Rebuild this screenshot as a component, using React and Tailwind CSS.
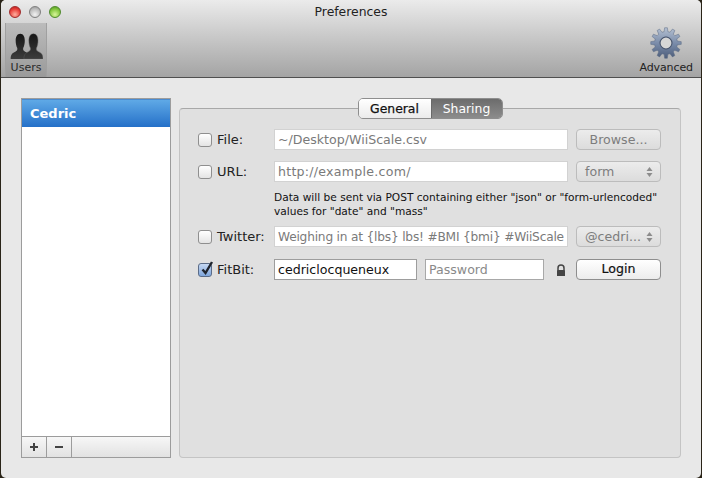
const gearPath = (() => {
  const n = 12, cx = 20, cy = 20, R = 18, r = 13.5;
  let d = "";
  for (let i = 0; i < n; i++) {
    const a = (i / n) * Math.PI * 2 - Math.PI / 2;
    const s = (Math.PI * 2) / n;
    const pts = [
      [r, a - s * 0.32],
      [R, a - s * 0.17],
      [R, a + s * 0.17],
      [r, a + s * 0.32],
    ];
    pts.forEach(([rad, t], j) => {
      d += `${i === 0 && j === 0 ? "M" : "L"}${(cx + rad * Math.cos(t)).toFixed(2)} ${(cy + rad * Math.sin(t)).toFixed(2)} `;
    });
  }
  d += "Z M27 20 A7 7 0 1 0 13 20 A7 7 0 1 0 27 20 Z";
  return d;
})();

function Gear() {
  return (
    <svg width="34" height="34" viewBox="0 0 40 40">
      <defs>
        <linearGradient id="gearFill" x1="0" y1="0" x2="0" y2="1">
          <stop offset="0" stopColor="#b4c0d2" />
          <stop offset="0.55" stopColor="#7688a6" />
          <stop offset="1" stopColor="#4d5d7a" />
        </linearGradient>
      </defs>
      <path d={gearPath} fill="url(#gearFill)" fillRule="evenodd" stroke="#5b6a84" strokeWidth="0.6" />
      <circle cx="20" cy="20" r="7" fill="#d6d6d6" stroke="#46536c" strokeWidth="1.2" />
    </svg>
  );
}

function UsersIcon() {
  const body = "M1 32 C1 26 4 24.5 8 23 C10.5 22 11.6 20.5 11 18.5 C9.4 16 8.6 12.5 8.6 9.5 C8.6 4.5 11 1 15.5 1 C20 1 22.4 4.5 22.4 9.5 C22.4 12.5 21.6 16 20 18.5 C19.4 20.5 20.5 22 23 23 C27 24.5 30 26 30 32 Z";
  return (
    <svg width="33" height="26" viewBox="0 0 50 32" preserveAspectRatio="none">
      <defs>
        <linearGradient id="userFill" x1="0" y1="0" x2="0" y2="1">
          <stop offset="0" stopColor="#161616" />
          <stop offset="1" stopColor="#3c3c3c" />
        </linearGradient>
      </defs>
      <path d={body} fill="url(#userFill)" />
      <g transform="translate(20 0)">
        <path d={body} fill="url(#userFill)" stroke="#606060" strokeWidth="0.6" />
      </g>
    </svg>
  );
}

function Check({ checked }) {
  return (
    <span className={`relative block w-[14px] h-[14px] shrink-0 rounded-[3px] border ${checked ? "border-[#5b6c88] bg-gradient-to-b from-[#c6d8f2] to-[#7fa6dc]" : "border-[#8f8f8f] bg-gradient-to-b from-[#ffffff] to-[#e4e4e4]"}`}>
      {checked && (
        <svg className="absolute left-[1px] top-[-4px]" width="15" height="16" viewBox="0 0 15 16">
          <path d="M2.5 9.5 L5.5 13 L12 2" fill="none" stroke="#20252e" strokeWidth="2.4" />
        </svg>
      )}
    </span>
  );
}

function Label({ checked, children }) {
  return (
    <div className="flex items-center gap-[5px] w-[75px] shrink-0">
      <Check checked={checked} />
      <span className="text-[#222] text-[13px] leading-none">{children}</span>
    </div>
  );
}

function Field({ value, width, dark, muted, className = "" }) {
  return (
    <div className={`h-[21px] ${width} shrink-0 bg-white border flex items-center pl-[3px] pt-[2px] overflow-hidden whitespace-nowrap ${dark ? "border-[#9d9d9d] text-[#111]" : muted ? "border-[#a8a8a8] text-[#8a8a8a]" : "border-[#d2d2d2] text-[#7a7a7a]"} ${className}`}>
      {value}
    </div>
  );
}

function Select({ value }) {
  return (
    <div className="h-[21px] w-[85px] shrink-0 rounded-[4px] border border-[#bcbcbc] bg-gradient-to-b from-[#ececec] to-[#dcdcdc] flex items-center justify-between pl-[8px] pr-[7px] text-[#7d7d7d]">
      <span className="pt-[1px]">{value}</span>
      <svg width="7" height="12" viewBox="0 0 7 12">
        <path d="M3.5 1 L6.5 5 H0.5 Z M3.5 11 L0.5 7 H6.5 Z" fill="#8c8c8c" />
      </svg>
    </div>
  );
}

function Row({ children, className = "" }) {
  return <div className={`flex items-center h-[21px] ${className}`}>{children}</div>;
}

export default function App() {
  return (
    <div className="w-[702px] h-[478px] bg-[#2a2418] overflow-hidden" style={{ fontFamily: '"DejaVu Sans", sans-serif' }}>
      <div className="ml-[1px] w-[700px] h-[478px] rounded-[5px] overflow-hidden bg-[#e8e8e8] flex flex-col">
        <header className="h-[78px] shrink-0 bg-gradient-to-b from-[#ebebeb] to-[#a4a4a4] border-b border-[#4f4f4f] flex flex-col">
          <div className="h-[23px] shrink-0 flex items-center pl-[8px] gap-[8px] relative">
            <span className="w-[12px] h-[12px] rounded-full border border-[#a02a2a] bg-[radial-gradient(circle_at_50%_75%,#ffb0a0,#e8403a_60%,#b01a1a)]" />
            <span className="w-[12px] h-[12px] rounded-full border border-[#808080] bg-[radial-gradient(circle_at_50%_75%,#f2f2f2,#bdbdbd_60%,#8f8f8f)]" />
            <span className="w-[12px] h-[12px] rounded-full border border-[#4f8a2c] bg-[radial-gradient(circle_at_50%_75%,#d8f59a,#83c63e_60%,#4a8c1e)]" />
            <span className="absolute inset-x-0 top-0 h-[23px] pt-[2px] flex items-center justify-center text-[12.4px] text-[#222]">Preferences</span>
          </div>
          <div className="flex-1 flex items-stretch justify-between pl-[4px] pr-[8px]">
            <div className="w-[42px] flex flex-col items-center justify-end pb-[2px] border-x border-[#a0a0a0] bg-gradient-to-b from-[#bcbcbc] to-[#9a9a9a]">
              <UsersIcon />
              <span className="text-[11px] leading-[15px] text-[#2a2a2a] mt-[1px]">Users</span>
            </div>
            <div className="flex flex-col items-center justify-end pb-[2px]">
              <Gear />
              <span className="text-[11px] leading-[15px] text-[#222]" style={{ letterSpacing: "-0.1px" }}>Advanced</span>
            </div>
          </div>
        </header>

        <main className="flex-1 flex pl-[20px] pr-[20px] pt-[20px] pb-[20px] gap-[8px]">
          <aside className="w-[150px] shrink-0 bg-white border border-[#9c9c9c] flex flex-col">
            <div className="h-[28px] bg-gradient-to-b from-[#5fa9e6] to-[#2470c8] border-t border-[#4a8bd0] flex items-center pl-[8px] text-white font-bold text-[13px]">Cedric</div>
            <div className="flex-1" />
            <div className="h-[21px] border-t border-[#9c9c9c] flex bg-gradient-to-b from-[#f7f7f7] to-[#e2e2e2]">
              <div className="w-[25px] border-r border-[#9c9c9c] flex items-center justify-center">
                <svg width="10" height="10" viewBox="0 0 10 10"><path d="M4 1h2v3h3v2H6v3H4V6H1V4h3z" fill="#444" /></svg>
              </div>
              <div className="w-[25px] border-r border-[#9c9c9c] flex items-center justify-center">
                <svg width="10" height="10" viewBox="0 0 10 10"><path d="M1 4h8v2H1z" fill="#444" /></svg>
              </div>
            </div>
          </aside>

          <section className="w-[502px] shrink-0 flex flex-col">
            <div className="self-center z-10 flex h-[21px] w-[145px] mb-[-11px] rounded-[5px] border border-[#8e8e8e] overflow-hidden text-[12.4px]">
              <div className="w-[72px] pt-[1px] bg-gradient-to-b from-[#ffffff] to-[#ebebeb] flex items-center justify-center text-[#111] [-webkit-text-stroke:0.25px_#111]">General</div>
              <div className="flex-1 pt-[1px] border-l border-[#6a6a6a] bg-gradient-to-b from-[#6c6c6c] to-[#8c8c8c] flex items-center justify-center text-white">Sharing</div>
            </div>
            <div className="flex-1 rounded-[4px] border border-[#c4c4c4] border-t-[#a8a8a8] bg-[#e0e0e0] pt-[20px] pl-[18px] pr-[19px] text-[12.6px]">
              <Row>
                <Label>File:</Label>
                <div className="ml-[1px]"><Field width="w-[294px]" value="~/Desktop/WiiScale.csv" /></div>
                <div className="ml-[8px] h-[21px] w-[85px] pt-[1px] rounded-[4px] border border-[#bcbcbc] bg-gradient-to-b from-[#ececec] to-[#dcdcdc] flex items-center justify-center text-[#7d7d7d]">Browse...</div>
              </Row>
              <Row className="mt-[11px]">
                <Label>URL:</Label>
                <div className="ml-[1px]"><Field width="w-[294px]" value="http://example.com/" className="tracking-[0.25px]" /></div>
                <div className="ml-[8px]"><Select value="form" /></div>
              </Row>
              <p className="ml-[76px] mt-[8px] h-[28px] text-[10.6px] leading-[14px] text-[#111]">
                Data will be sent via POST containing either "json" or "form-urlencoded"<br />values for "date" and "mass"
              </p>
              <Row className="mt-[8px]">
                <Label>Twitter:</Label>
                <div className="ml-[1px]"><Field width="w-[294px]" value="Weighing in at {lbs} lbs! #BMI {bmi} #WiiScale" className="text-[12.2px] tracking-[-0.2px]" /></div>
                <div className="ml-[8px]"><Select value="@cedri..." /></div>
              </Row>
              <Row className="mt-[12px]">
                <Label checked>FitBit:</Label>
                <div className="ml-[1px]"><Field dark width="w-[143px]" value="cedriclocqueneux" /></div>
                <div className="ml-[8px]"><Field muted width="w-[119px]" value="Password" /></div>
                <svg className="ml-[12px] shrink-0" width="10" height="12" viewBox="0 0 10 12">
                  <path d="M2 6V4a3 3 0 0 1 6 0v2" fill="none" stroke="#444" strokeWidth="1.5" />
                  <rect x="1" y="6" width="8" height="6" rx="0.5" fill="#444" />
                </svg>
                <div className="ml-[10px] h-[21px] w-[86px] rounded-[4px] border border-[#8e8e8e] bg-gradient-to-b from-[#ffffff] to-[#ececec] flex items-center justify-center text-[#111] [-webkit-text-stroke:0.2px_#111]">Login</div>
              </Row>
            </div>
          </section>
        </main>
      </div>
    </div>
  );
}
